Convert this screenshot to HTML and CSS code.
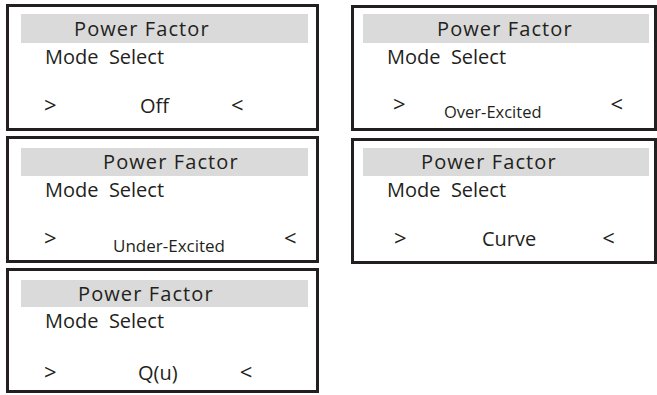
FILE: index.html
```html
<!DOCTYPE html>
<html lang="en">

<head>
    <meta charset="UTF-8">
    <meta name="viewport" content="width=device-width, initial-scale=1.0">
    <title>Power Factor Mode Select</title>
    <link rel="stylesheet" href="styles.css">
</head>

<body>
    <div class="page">
        <div class="column column-left">
            <div class="panel panel-l1">
                <div class="head head-l1">Power Factor</div>
                <div class="label">Mode&nbsp; Select</div>
                <div class="row row-l1">
                    <span class="arrow arrow-l">&gt;</span>
                    <span class="value value-l1">Off</span>
                    <span class="arrow arrow-l1">&lt;</span>
                </div>
            </div>

            <div class="panel panel-l2">
                <div class="head head-l2">Power Factor</div>
                <div class="label">Mode&nbsp; Select</div>
                <div class="row row-raised row-l2">
                    <span class="arrow arrow-l">&gt;</span>
                    <span class="value value-small value-l2">Under-Excited</span>
                    <span class="arrow arrow-l2">&lt;</span>
                </div>
            </div>

            <div class="panel panel-l3">
                <div class="head head-l3">Power Factor</div>
                <div class="label">Mode&nbsp; Select</div>
                <div class="row row-l3">
                    <span class="arrow arrow-l">&gt;</span>
                    <span class="value value-l3">Q(u)</span>
                    <span class="arrow arrow-l3">&lt;</span>
                </div>
            </div>
        </div>

        <div class="column column-right">
            <div class="panel panel-r1">
                <div class="head head-r1">Power Factor</div>
                <div class="label">Mode&nbsp; Select</div>
                <div class="row row-raised row-r1">
                    <span class="arrow arrow-r1a">&gt;</span>
                    <span class="value value-smaller value-r1">Over-Excited</span>
                    <span class="arrow arrow-r1">&lt;</span>
                </div>
            </div>

            <div class="panel panel-r2">
                <div class="head head-r2">Power Factor</div>
                <div class="label">Mode&nbsp; Select</div>
                <div class="row row-r2">
                    <span class="arrow arrow-r2a">&gt;</span>
                    <span class="value value-r2">Curve</span>
                    <span class="arrow arrow-r2">&lt;</span>
                </div>
            </div>
        </div>
    </div>
</body>

</html>
```

FILE: styles.css
```css
body {
    margin: 0;
    background-color: #fff;
    color: #231f20;
    font-family: "Open Sans", "Liberation Sans", sans-serif;
    font-size: 20px;
}

.page {
    display: flex;
    align-items: flex-start;
    padding: 4px 0 0 6px;
    gap: 32px;
}

.column {
    display: flex;
    flex-direction: column;
    gap: 5px;
}

.column-left {
    width: 313px;
}

.column-right {
    width: 306px;
    margin-top: 1px;
    gap: 7px;
}

/* lcd screen box */
.panel {
    box-sizing: border-box;
    height: 127px;
    border: 3px solid #231f20;
    padding: 7px 8px 0 12px;
}

.panel-l2 { padding-top: 9px; }
.panel-l3 { padding-top: 9px; height: 125px; }
.panel-r1 { height: 126px; padding: 6px 5px 0 9px; }
.panel-r2 { height: 126px; padding: 7px 5px 0 9px; }

.head {
    height: 29px;
    line-height: 29px;
    background-color: #d9dad9;
    letter-spacing: 1.1px;
    white-space: nowrap;
}

.head-l1 { padding-left: 53px; }
.head-l2 { padding-left: 82px; height: 28px; line-height: 28px; }
.head-l3 { padding-left: 57px; height: 27px; line-height: 27px; }
.head-r1 { padding-left: 74px; }
.head-r2 { padding-left: 58px; height: 28px; line-height: 28px; }

.label {
    line-height: 28px;
    padding-left: 24px;
    white-space: nowrap;
}

.row {
    display: flex;
    align-items: baseline;
    line-height: 28px;
    white-space: nowrap;
}

.row-raised {
    align-items: flex-start;
}

.row-l1 { margin-top: 19px; }
.row-l2 { margin-top: 19px; }
.row-l3 { margin-top: 22px; }
.row-r1 { margin-top: 18px; }
.row-r2 { margin-top: 19px; }

.arrow {
    width: 13px;
    font-size: 22px;
}

.value-small {
    font-size: 17px;
    margin-top: 9px;
}

.value-smaller {
    font-size: 16.5px;
    margin-top: 9px;
}

/* horizontal placement of the selector line */
.arrow-l { margin-left: 23px; }

.value-l1 { margin-left: 83px; }
.arrow-l1 { margin-left: 62px; }

.value-l2 { margin-left: 56px; }
.arrow-l2 { margin-left: 59px; }

.value-l3 { margin-left: 81px; }
.arrow-l3 { margin-left: 62px; }

.arrow-r1a { margin-left: 30px; }
.value-r1 { margin-left: 38px; }
.arrow-r1 { margin-left: 69px; }

.arrow-r2a { margin-left: 31px; }
.value-r2 { margin-left: 75px; }
.arrow-r2 { margin-left: 66px; }
```
